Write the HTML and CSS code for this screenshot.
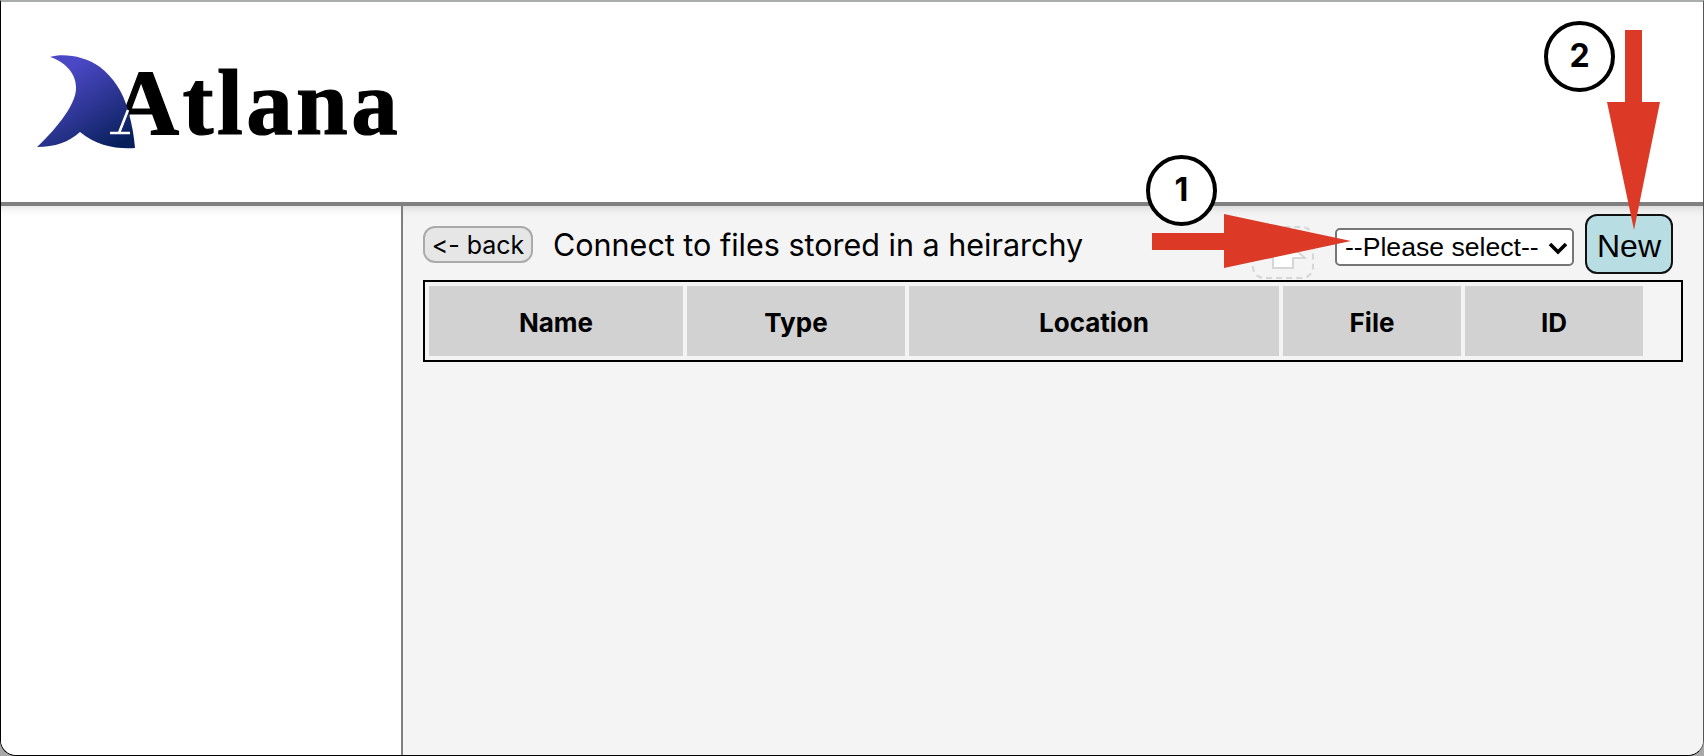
FILE: index.html
```html
<!DOCTYPE html>
<html>
  <head>
    <title>Atlana</title>
    <link rel="stylesheet" href="styles.css">
  </head>
  <body>
    <div class="window">
      <div class="header">
        <div class="logo">
          <span class="logo-text">Atlana</span>
          <!-- fin sits in front of the A, its left leg shows white on the blue -->
          <svg class="logo-fin" width="100" height="100" viewBox="0 0 100 100">
            <defs>
              <linearGradient id="finFill" x1="0.3" y1="0.15" x2="0.85" y2="0.95">
                <stop offset="0" stop-color="#4b48c6"/>
                <stop offset="0.5" stop-color="#2c3592"/>
                <stop offset="1" stop-color="#07205c"/>
              </linearGradient>
            </defs>
            <path fill="url(#finFill)" d="M13 3 C26 -1 48 2 63 13 C76 23 86 38 91 56 C95 70 97 82 98 94 C78 95 60 92 43 78 C32 88 18 93 0 93 C14 80 40 52 39 33 C39 18 26 7 13 3 Z"/>
            <path fill="none" stroke="#fff" stroke-width="2.6" d="M73 79 H93 M82 79 L91 56"/>
          </svg>
        </div>
      </div>
      <div class="content">
        <div class="sidebar"></div>
        <div class="main">
          <div class="toolbar">
            <button class="back">&lt;- back</button>
            <span class="title">Connect to files stored in a heirarchy</span>
            <div class="dropzone">
              <svg width="46" height="30" viewBox="0 0 46 30">
                <path fill="#fff" stroke="#d6d6d6" stroke-width="2" d="M13 29 V19 H1 L23 1 L45 19 H33 V29 Z"/>
              </svg>
            </div>
            <div class="select-wrap">
              <select class="picker">
                <option>--Please select--</option>
              </select>
              <svg class="chevron" width="20" height="13" viewBox="0 0 20 13">
                <path fill="none" stroke="#000" stroke-width="3.6" d="M2 2 L10 10 L18 2"/>
              </svg>
            </div>
            <button class="new">New</button>
          </div>
          <table class="grid">
            <thead>
              <tr>
                <th class="col-name">Name</th>
                <th class="col-type">Type</th>
                <th class="col-location">Location</th>
                <th class="col-file">File</th>
                <th class="col-id">ID</th>
                <th class="col-rest"></th>
              </tr>
            </thead>
          </table>
        </div>
      </div>

      <!-- annotations drawn on top of the screenshot -->
      <svg class="arrows" width="1704" height="756" viewBox="0 0 1704 756">
        <polygon fill="#dc3a26" points="1152,233 1224,233 1224,214 1351,241 1224,268 1224,250 1152,250"/>
        <polygon fill="#dc3a26" points="1625,30 1642,30 1642,102 1660,102 1634,230 1607,102 1625,102"/>
      </svg>
      <div class="badge badge-one">1</div>
      <div class="badge badge-two">2</div>
    </div>
  </body>
</html>
```

FILE: styles.css
```css
html, body {
    margin: 0;
    padding: 0;
    height: 100%;
    background: #a8a8a8;
    font-family: Inter, "Noto Sans", sans-serif;
    font-variant-ligatures: none;
    font-feature-settings: "calt" 0;
    overflow: hidden;
}
.window {
    position: relative;
    box-sizing: border-box;
    width: 1704px;
    height: 756px;
    display: flex;
    flex-direction: column;
    background: #fff;
    border-top: 2px solid #a9adab;
    border-left: 1px solid #000;
    border-right: 1px solid #555;
    border-bottom: 1px solid #000;
    border-radius: 0 0 16px 16px;
    overflow: hidden;
}
.header {
    box-sizing: border-box;
    height: 204px;
    flex: none;
    border-bottom: 4px solid #808080;
    padding: 52px 0 0 36px;
}
.logo {
    display: flex;
    flex-direction: row-reverse;
    justify-content: flex-end;
    align-items: flex-start;
    filter: blur(0.5px);
}
.logo-fin {
    flex: none;
    position: relative;
    overflow: visible;
}
.logo-text {
    margin: -1px 0 0 -25px;
    font: bold 93px "Liberation Serif", serif;
    letter-spacing: 3.4px;
    line-height: 100px;
    color: #000;
    -webkit-text-stroke: 1.2px #000;
}
.content {
    flex: 1;
    display: flex;
    min-height: 0;
}
.sidebar {
    width: 400px;
    flex: none;
    border-right: 2px solid #808080;
    background: #fff;
    box-shadow: inset 0 10px 8px -8px #e2e2e2;
}
.main {
    flex: 1;
    padding: 8px 20px 0 20px;
    background: #f4f4f4;
    box-shadow: inset 0 10px 8px -8px #d4d4d4;
}
.toolbar {
    display: flex;
    align-items: flex-start;
    height: 66px;
}
.back {
    box-sizing: border-box;
    width: 110px;
    height: 37px;
    margin-top: 12px;
    padding: 0;
    border: 2px solid #aaa;
    border-radius: 12px;
    background: #e6e6e6;
    color: #000;
    font: 25px Inter, sans-serif;
    font-variant-ligatures: none;
    font-feature-settings: "calt" 0;
}
.title {
    margin: 13px 0 0 20px;
    font-size: 30.5px;
    line-height: 36px;
    color: #000;
}
.dropzone {
    box-sizing: border-box;
    width: 62px;
    height: 53px;
    margin: 12px 0 0 auto;
    border: 2px dashed #d6d6d6;
    border-radius: 12px;
    display: flex;
    align-items: flex-end;
    justify-content: center;
    padding-bottom: 8px;
}
.select-wrap {
    position: relative;
    margin: 14px 11px 0 21px;
}
.picker {
    display: block;
    box-sizing: border-box;
    width: 239px;
    height: 38px;
    padding: 0 0 0 8px;
    appearance: none;
    border: 2px solid #767676;
    border-radius: 5px;
    background: #fff;
    color: #000;
    font: 26.6px "Liberation Sans", Arial, sans-serif;
}
.chevron {
    position: absolute;
    top: 14px;
    right: 6px;
}
.new {
    box-sizing: border-box;
    width: 88px;
    height: 60px;
    margin-right: 10px;
    padding: 4px 0 0;
    border: 2px solid #111;
    border-radius: 12px;
    background: #b8dde3;
    color: #000;
    font: 32px "Liberation Sans", Arial, sans-serif;
}
.grid {
    box-sizing: border-box;
    width: 1260px;
    border: 2px solid #000;
    border-spacing: 4px;
    table-layout: fixed;
}
.grid th {
    height: 70px;
    padding: 3px 0 0;
    box-sizing: border-box;
    background: #d2d2d2;
    color: #000;
    font-size: 26px;
    font-weight: 700;
}
.grid .col-name { width: 254px; }
.grid .col-type { width: 218px; }
.grid .col-location { width: 370px; }
.grid .col-file { width: 178px; }
.grid .col-id { width: 178px; }
.grid .col-rest { background: none; }
.arrows {
    position: absolute;
    top: -2px;
    left: -1px;
    pointer-events: none;
}
.badge {
    position: absolute;
    box-sizing: border-box;
    width: 71px;
    height: 71px;
    border: 4px solid #000;
    border-radius: 50%;
    background: #fff;
    color: #000;
    font-size: 32px;
    font-weight: 700;
    line-height: 62px;
    text-align: center;
}
.badge-one {
    left: 1145px;
    top: 153px;
}
.badge-two {
    left: 1543px;
    top: 19px;
}
```
